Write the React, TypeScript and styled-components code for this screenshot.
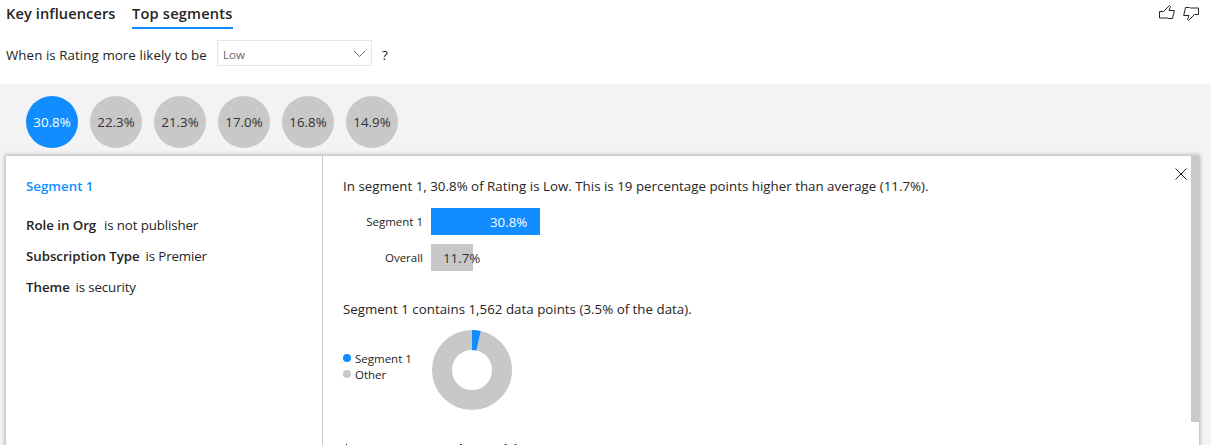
import React from "react";
import styled, { createGlobalStyle } from "styled-components";

const BLUE = "#118dff";
const GREY = "#c8c8c8";

const GlobalStyle = createGlobalStyle`
  * { box-sizing: border-box; }
  body {
    margin: 0;
    background: #fff;
    color: #252423;
    font-family: "Open Sans", "Noto Sans", sans-serif;
    font-size: 13.3px;
    line-height: 20px;
    overflow: hidden;
  }
`;

const Page = styled.div`
  display: flex;
  flex-direction: column;
  width: 1215px;
  height: 445px;
  overflow: hidden;
  white-space: nowrap;
`;

const Text = styled.span<{ $track?: number }>`
  letter-spacing: ${(p) => p.$track ?? 0}px;
`;

const Header = styled.header`
  display: flex;
  flex-shrink: 0;
  justify-content: space-between;
  height: 40px;
  padding: 0 15px 0 6px;
`;

const Tabs = styled.nav`
  display: flex;
  gap: 16px;
`;

const Tab = styled.div<{ $active?: boolean; $width: number }>`
  width: ${(p) => p.$width}px;
  height: 29px;
  padding-top: 3px;
  font-size: 14.6px;
  font-weight: 600;
  border-bottom: 2px solid ${(p) => (p.$active ? BLUE : "transparent")};
`;

const Feedback = styled.div`
  display: flex;
  gap: 7px;
  padding-top: 4px;
`;

const Question = styled.div`
  display: flex;
  flex-shrink: 0;
  height: 44px;
  padding-left: 6px;
`;

const Prompt = styled.div`
  width: 211px;
  padding-top: 5px;
`;

const Select = styled.div`
  display: flex;
  align-items: center;
  justify-content: space-between;
  width: 155px;
  height: 26px;
  margin-right: 10px;
  padding: 3px 5px 0 5px;
  border: 1px solid #e6e6e6;
  color: #666;
  font-size: 11.5px;

  svg { margin-top: -1px; }
`;

const QuestionMark = styled.div`
  padding-top: 5px;
`;

const Body = styled.main`
  flex: 1;
  min-height: 0;
  width: 1211px;
  padding: 12px 12px 0 6px;
  background: #f3f3f3;
`;

const Bubbles = styled.div`
  display: flex;
  gap: 12px;
  height: 60px;
  padding-left: 20px;
`;

const Bubble = styled.div<{ $active?: boolean }>`
  display: flex;
  align-items: center;
  justify-content: center;
  width: 52px;
  height: 52px;
  border-radius: 50%;
  background: ${(p) => (p.$active ? BLUE : GREY)};
  color: ${(p) => (p.$active ? "#fff" : "#333")};
`;

const Panel = styled.section`
  display: flex;
  height: 320px;
  background: #fff;
  box-shadow: 0 0 4px 1px rgba(0, 0, 0, 0.28);
`;

const Conditions = styled.aside`
  width: 317px;
  padding: 20px;
  border-right: 1px solid ${GREY};
`;

const SegmentName = styled.div`
  height: 39px;
  color: ${BLUE};
  font-weight: 600;
`;

const Condition = styled.div`
  display: flex;
  height: 31px;
`;

const Field = styled.div<{ $width: number }>`
  width: ${(p) => p.$width}px;
  font-weight: 600;
`;

const Detail = styled.div`
  flex: 1;
  padding: 20px 0 0 20px;
`;

const Sentence = styled.div`
  height: 32px;
`;

const BarRow = styled.div<{ $last?: boolean }>`
  display: flex;
  height: ${(p) => (p.$last ? 55 : 36)}px;
`;

const BarLabel = styled.div`
  width: 80px;
  margin-right: 8px;
  padding-top: 4px;
  text-align: right;
  font-size: 11.5px;
`;

const Bar = styled.div<{ $width: number; $active?: boolean }>`
  width: ${(p) => p.$width}px;
  height: 27px;
  padding: 4px 0 0 ${(p) => (p.$active ? 59 : 12)}px;
  background: ${(p) => (p.$active ? BLUE : GREY)};
  color: ${(p) => (p.$active ? "#fff" : "#333")};
`;

const Share = styled.div`
  display: flex;
  height: 109px;
  margin-top: -1px;
`;

const Legend = styled.div`
  width: 89px;
  padding-top: 21px;
`;

const LegendItem = styled.div`
  display: flex;
  align-items: center;
  gap: 4px;
  height: 16px;
  font-size: 11.5px;
`;

const Dot = styled.i<{ $active?: boolean }>`
  width: 8px;
  height: 8px;
  margin-top: -2px;
  border-radius: 50%;
  background: ${(p) => (p.$active ? BLUE : GREY)};
`;

const LearnMore = styled.div`
  display: flex;
  gap: 8px;
  padding-left: 2px;
  font-size: 15px;
  font-weight: 600;

  svg { margin-top: 4px; }
`;

const Close = styled.div`
  width: 16px;
  padding-top: 12px;
  line-height: 0;
`;

const Scroll = styled.div`
  width: 8px;
`;

const Thumb = styled.div`
  height: 266px;
  background: ${GREY};
`;

const shares = ["30.8%", "22.3%", "21.3%", "17.0%", "16.8%", "14.9%"];

const conditions = [
  { field: "Role in Org", value: "is not publisher", width: 78 },
  { field: "Subscription Type", value: "is Premier", width: 119.5 },
  { field: "Theme", value: "is security", width: 49.5 },
];

const thumbPath = "M2.5 7.5H6.5L12.5 1.5L13.5 2.5L12 6.5H17.3L15.5 14.5H11.5L10.5 14H2.5Z";

export default function App() {
  return (
    <Page>
      <GlobalStyle />
      <Header>
        <Tabs>
          <Tab $width={110}><Text $track={0.1}>Key influencers</Text></Tab>
          <Tab $width={101} $active><Text $track={0.2}>Top segments</Text></Tab>
        </Tabs>
        <Feedback>
          <svg width="18" height="17" viewBox="0 0 18 17" fill="none" stroke="#252423">
            <path d={thumbPath} />
          </svg>
          <svg width="18" height="17" viewBox="0 0 18 17" fill="none" stroke="#252423">
            <path d={thumbPath} transform="rotate(180 9.5 9)" />
          </svg>
        </Feedback>
      </Header>
      <Question>
        <Prompt><Text $track={0.08}>When is Rating more likely to be</Text></Prompt>
        <Select>
          <Text>Low</Text>
          <svg width="13" height="8" viewBox="0 0 13 8" fill="none" stroke="#666">
            <path d="M1 1L6.5 6.5L12 1" />
          </svg>
        </Select>
        <QuestionMark>?</QuestionMark>
      </Question>
      <Body>
        <Bubbles>
          {shares.map((s, i) => (
            <Bubble key={s} $active={i === 0}><Text>{s}</Text></Bubble>
          ))}
        </Bubbles>
        <Panel>
          <Conditions>
            <SegmentName><Text>Segment 1</Text></SegmentName>
            {conditions.map((c) => (
              <Condition key={c.field}>
                <Field $width={c.width}><Text $track={-0.04}>{c.field}</Text></Field>
                <Text $track={-0.12}>{c.value}</Text>
              </Condition>
            ))}
          </Conditions>
          <Detail>
            <Sentence>
              <Text $track={0.02}>In segment 1, 30.8% of Rating is Low. This is 19 percentage points higher than average (11.7%).</Text>
            </Sentence>
            <BarRow>
              <BarLabel><Text>Segment 1</Text></BarLabel>
              <Bar $width={109} $active><Text>30.8%</Text></Bar>
            </BarRow>
            <BarRow $last>
              <BarLabel><Text>Overall</Text></BarLabel>
              <Bar $width={42}><Text>11.7%</Text></Bar>
            </BarRow>
            <Sentence>
              <Text $track={0.02}>Segment 1 contains 1,562 data points (3.5% of the data).</Text>
            </Sentence>
            <Share>
              <Legend>
                <LegendItem><Dot $active /><Text>Segment 1</Text></LegendItem>
                <LegendItem><Dot /><Text>Other</Text></LegendItem>
              </Legend>
              <svg width="80" height="80" viewBox="0 0 80 80">
                <circle cx="40" cy="40" r="30" fill="none" stroke={GREY} strokeWidth="20" />
                <path d="M40 0A40 40 0 0 1 48.7 0.96L44.35 20.48A20 20 0 0 0 40 20Z" fill={BLUE} />
              </svg>
            </Share>
            <LearnMore>
              <svg width="7" height="12" viewBox="0 0 7 12" fill="none" stroke="#252423">
                <path d="M1 1L6 6L1 11" />
              </svg>
              <Text $track={0.18}>Learn more about this segment</Text>
            </LearnMore>
          </Detail>
          <Close>
            <svg width="12" height="12" viewBox="0 0 12 12" fill="none" stroke="#252423">
              <path d="M0.5 0.5L11.5 11.5M11.5 0.5L0.5 11.5" />
            </svg>
          </Close>
          <Scroll><Thumb /></Scroll>
        </Panel>
      </Body>
    </Page>
  );
}
